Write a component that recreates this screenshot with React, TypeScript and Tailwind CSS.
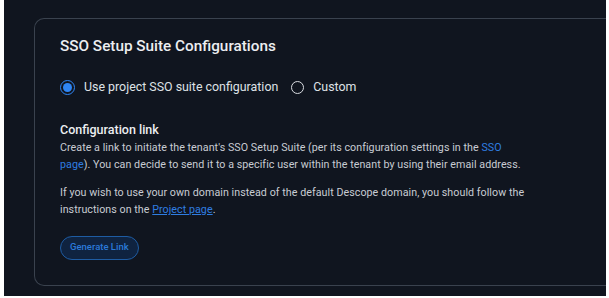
import * as React from "react";

function Radio({ checked, label }: { checked?: boolean; label: string }) {
  return (
    <label className="flex items-center gap-[9px] cursor-pointer">
      {checked ? (
        <span className="flex size-[15px] items-center justify-center rounded-full border-[1.5px] border-[#2f86f5]">
          <span className="size-[9px] rounded-full bg-[#2f86f5]" />
        </span>
      ) : (
        <span className="size-[13px] rounded-full border-[1.5px] border-[#d9dce1]" />
      )}
      <span>{label}</span>
    </label>
  );
}

export default function App() {
  return (
    <div className="h-[298px] w-[609px] bg-white pl-[4px] pr-[3px] pb-[2px]">
      <div
        className="h-full overflow-hidden bg-[#10151f] pl-[30px] pt-[18px]"
        style={{ fontFamily: "Roboto, 'Liberation Sans', sans-serif" }}
      >
        <div className="-mr-4 h-[268px] rounded-l-[10px] border border-r-0 border-[#3a424e] pl-[25px] pt-[17px]">
          <h2 className="text-[15.3px] font-medium leading-[20px] text-[#eceef1]">
            SSO Setup Suite Configurations
          </h2>

          {/* radio group */}
          <div className="mt-[22px] flex items-center gap-[13px] text-[12.4px] text-[#dfe2e6]">
            <Radio checked label="Use project SSO suite configuration" />
            <Radio label="Custom" />
          </div>

          <div className="mt-[25px] text-[12.5px] font-medium leading-[16px] text-[#eceef1]">
            Configuration link
          </div>
          <p className="mt-[1px] w-[470px] text-[10.7px] leading-[17.5px] tracking-[0.05px] text-[#c8ccd3]">
            Create a link to initiate the tenant's SSO Setup Suite (per its configuration settings in the{" "}
            <a className="text-[#2f7de1]">SSO page</a>). You can decide to send it to a specific user within
            the tenant by using their email address.
          </p>
          <p className="mt-[10px] w-[470px] text-[10.7px] leading-[17.5px] tracking-[0.05px] text-[#c8ccd3]">
            If you wish to use your own domain instead of the default Descope domain, you should follow the
            instructions on the <a className="text-[#2f7de1] underline">Project page</a>.
          </p>

          <button className="mt-[17px] h-[24px] rounded-full border border-[#1e5ca3] bg-[#0f2340] px-[9px] text-[9.5px] font-medium text-[#2b79d8]">
            Generate Link
          </button>
        </div>
      </div>
    </div>
  );
}
